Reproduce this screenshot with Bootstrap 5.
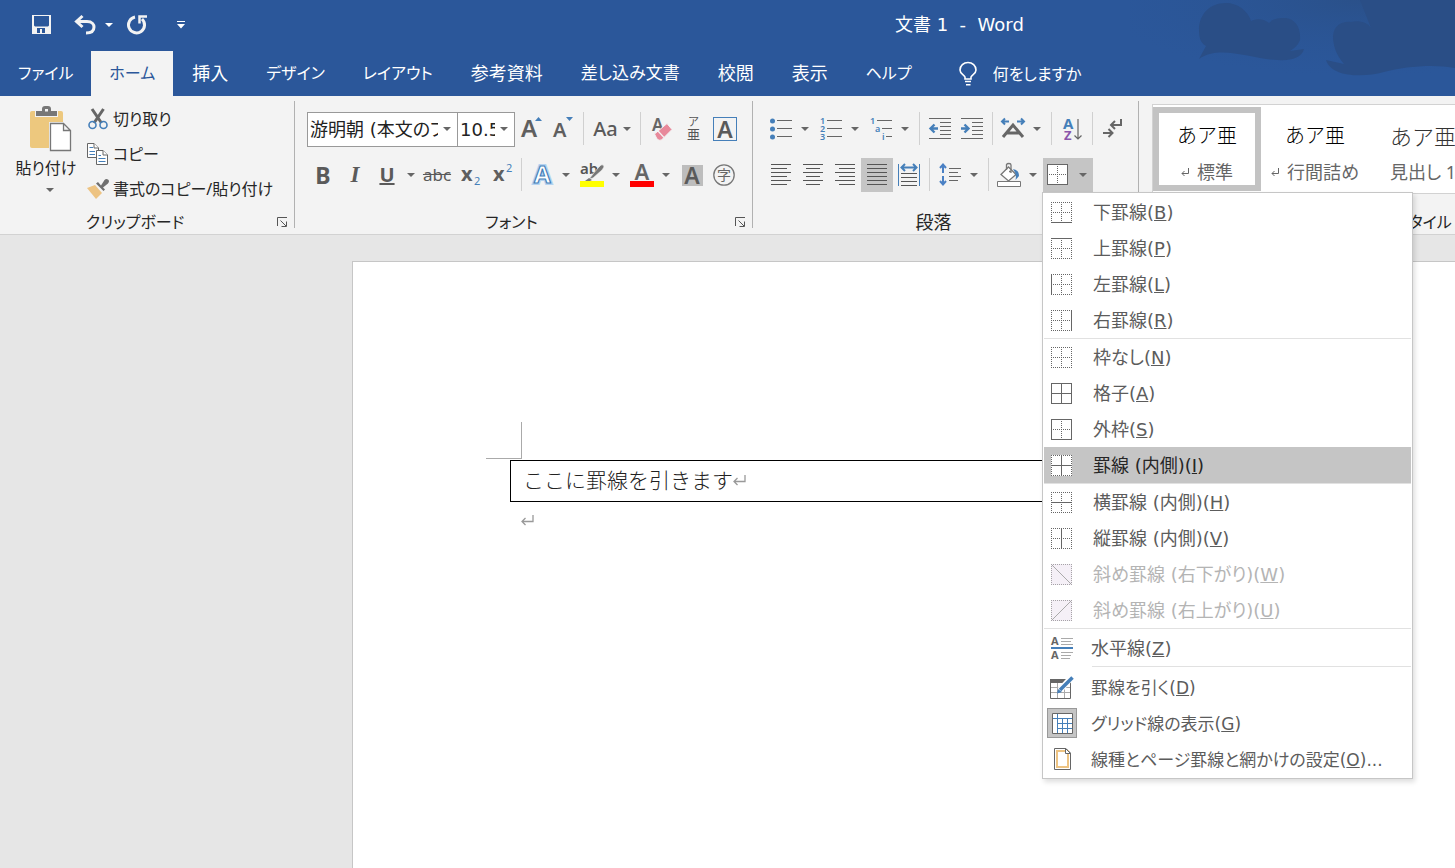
<!DOCTYPE html>
<html lang="ja">
<head>
<meta charset="utf-8">
<meta name="viewport" content="width=device-width, initial-scale=1">
<title>文書 1 - Word</title>
<link rel="stylesheet" href="https://cdn.jsdelivr.net/npm/bootstrap@5.3.0/dist/css/bootstrap.min.css">
<style>
:root{--word:#2b579a;--icon:#666;--blue:#457fb9;--sel:#c5c5c5;--line:#c6c6c6}
body{font-family:"Noto Sans","Noto Sans CJK JP",sans-serif;font-size:18px;line-height:24px;color:#262626;background:#e6e6e6;overflow:hidden;font-feature-settings:"palt"}
button,select,input{font-feature-settings:inherit}
svg{display:block;flex:none;overflow:visible}
.kana{font-size:16px}
.mixed{font-size:17px}
.wide-latin{font-family:"DejaVu Sans","Noto Sans CJK JP",sans-serif}
/* title bar and tabs */
.app-head{background:var(--word);color:#fff;position:relative}
.head-art{position:absolute;top:0;right:0}
.titlebar{height:51px;padding:0 0 2px 25px}
.qat{width:32px;height:32px}
.qat-drop{width:16px;height:32px}
.qat-drop .caret{border-top-color:#fff}
.qat,.qat-drop,.tool,.drop,.launch{padding:0;border:0;background:none;color:inherit;display:flex;align-items:center;justify-content:center;flex:none}
.doc-title{margin-left:698px;white-space:pre;line-height:22px}
.tabs{height:45px}
.tabs .nav-link{color:#fff;padding:10px 19px;height:45px;white-space:nowrap;border-radius:0}
.tabs .nav-link.snug{padding-left:18px;padding-right:18px}
.tabs .nav-link.active{background:#f3f3f3;color:var(--word)}
.tell{background:none;border:0;color:#fff;width:160px;padding:0}
.tell::placeholder{color:#fff;opacity:1}
/* ribbon */
.ribbon{background:#f3f3f3;border-bottom:1px solid #d2d2d2;padding-top:5px}
.rule{width:1px;background:#b1b1b1;margin-bottom:6px;flex:none}
.g-clip{width:294px}.g-font{width:457px}.g-para{width:385px}
.tools{padding:11px 0 17px 12px}
.tools-row{height:35px;display:flex;align-items:flex-start}
.tools-row + .tools-row{margin-top:11px}
.tool{width:32px;height:34px;color:#5a5a5a}
.drop{width:18px;height:34px;padding-right:3px}
.pressed{background:var(--sel)}
.split{width:9px;height:33px;flex:none;display:flex;justify-content:center}
.split::before{content:"";width:1px;background:#d0d0d0}
.caret{width:0;height:0;border:4px solid transparent;border-top-color:#666;border-bottom:0;flex:none}
.combo{height:35px;border:1px solid #999;border-radius:0;background:#fff;appearance:none;padding:0 19px 0 2px;color:#222;width:100%}
.combo-box{position:relative;width:151px}
.combo-box.size{width:58px;margin-left:-1px}
.combo-box .caret{position:absolute;right:7px;top:15px;pointer-events:none}
.group-name{height:24px}
.launch{width:24px;height:24px}
.paste{width:74px;padding:5px 0 0;border:0;background:none;margin-left:9px;color:inherit}
.clip-cmd{height:35px;border:0;background:none;padding:0;gap:4px;color:inherit;white-space:nowrap}
.clip-cmd svg{width:22px}
.lt{font-size:20px;font-weight:600}
.lt-lg{font-size:23px;font-weight:600}
.wide{width:48px;gap:5px;font-weight:500}
.slant{font-family:"Liberation Serif",serif}
.box-a{width:24px;height:24px;border:1px solid var(--blue);line-height:22px}
.shade-a{width:21px;height:21px;background:#bdbdbd;line-height:21px}
/* style gallery */
.g-style{min-width:0;overflow:hidden}
.style-in{width:568px;height:100%}
.gallery{margin:3px 0 0 13px;border:1px solid #d2d2d2;background:#fff;height:90px;padding-top:2px}
.style-tile{width:108px;height:84px;flex:none;border:6px solid transparent;background:none;padding:0;white-space:nowrap;color:#666}
.style-tile.on{border-color:#c3c3c3}
.sample{font-size:20px;line-height:30px;color:#000;font-feature-settings:normal;margin:7px 0 9px;font-weight:300}
.sample.head{font-size:22px;color:#333}
/* border menu */
.menu{position:absolute;top:34px;left:-1px;width:371px;z-index:10;background:#fff;border:1px solid var(--line);box-shadow:2px 3px 5px #0002;padding:1px}
.menu section + .inset + section{padding-top:2px}
.menu .last-rule{padding-top:1px}
.mi{height:36px;width:100%;border:0;background:none;padding:0 0 0 7px;color:#5c5c5c;gap:21px;text-align:left;white-space:nowrap}
.mi .txt{padding-top:2px}
.mi.hot{background:var(--sel);color:#262626}
.mi:disabled{color:#b4b4b4}
.mi.act{padding-left:3px;gap:14px}
.ico{width:30px;height:30px;display:flex;align-items:center;justify-content:center;flex:none}
.ico.on{background:var(--sel);border:1px solid #999}
.menu hr{margin:0;border:0;height:1px;background:#e1e1e1;opacity:1}
.menu hr.inset{margin-left:48px}
/* document */
.sheet{margin:26px 0 0 352px;background:#fff;border:1px solid var(--line);border-right:0;border-bottom:0;padding:160px 54px 0 133px}
.corner{width:36px;height:37px;border-right:1px solid #aaa;border-bottom:1px solid #aaa}
.framed{border:1px solid #000;height:42px;margin:1px 0 0 24px;padding:0 0 2px 12px}
.body-text{font-size:21px;color:#222;font-feature-settings:normal;font-weight:300}
.next-line{padding:13px 0 0 35px}
</style>
</head>
<body class="d-flex flex-column min-vh-100">
<svg width="0" height="0" class="position-absolute" aria-hidden="true">
<defs>
<g id="frame-dots" stroke="#666" stroke-dasharray="1 1"><path d="M0 .5H21M0 20.5H21M.5 0V21M20.5 0V21"/></g>
<g id="cross-dots" stroke="#666" stroke-dasharray="1 1"><path d="M0 10.5H21M10.5 0V21"/></g>
<g id="frame-line" stroke="#666"><path d="M.5 .5H20.5V20.5H.5Z"/></g>
<g id="launch-ico" fill="none" stroke="#555"><path d="M.5 9V.5H10M3.500 3.500L9 9M9.500 4.500V9.500H4.500"/></g>
<g id="ret" fill="none" stroke="#999" stroke-width="1.300"><path d="M12 0V6.500H1M4.500 3L1 6.500L4.500 10"/></g>
</defs>
</svg>

<header class="app-head">
<svg class="head-art" width="325" height="96" viewBox="0 0 325 96" aria-hidden="true">
<defs><radialGradient id="haze" cx=".7" cy="0" r=".8"><stop offset="0" stop-color="#2a4f86" stop-opacity=".8"/><stop offset="1" stop-color="#2a5494" stop-opacity="0"/></radialGradient></defs>
<path fill="url(#haze)" d="M0 0H325V96H0Z"/>
<path fill="#2a4e86" d="M69 30C69 14 80 3 96 3C108 3 118 11 121 21C127 18 135 19 139 23C143 18 150 18 156 18C166 19 171 29 170 40C168 46 163 49 160 51L174 49C172 58 160 61 148 60C124 60 90 44 69 59L76 46C70 43 69 36 69 30Z"/>
<path fill="#2a4e86" d="M230 0H325V68C306 64 275 66 254 72C232 78 201 77 196 60L214 64C206 55 203 45 203 36C204 26 211 21 221 22C228 20 238 22 241 28Z"/>
</svg>
<div class="titlebar d-flex align-items-center position-relative">
<button class="qat me-2" aria-label="上書き保存"><svg width="19" height="19" viewBox="0 0 19 19"><path fill="#f3f3f3" fill-rule="evenodd" d="M0 0H19V19H0ZM2 1V10.500L3 11.500H16L17 10.500V1ZM5 13V18H8V14H10V18H13V13Z"/></svg></button>
<button class="qat ms-1" aria-label="元に戻す"><svg width="22" height="20" viewBox="0 0 22 20" fill="none" stroke="#f3f3f3" stroke-width="3"><path d="M2 6.500H13C18.500 6.500 20 10 20 12C20 15.500 17.500 18 12 18"/><path d="M8.500 1L2.500 6.500L8.500 12"/></svg></button>
<button class="qat-drop" aria-label="元に戻す履歴"><span class="caret"></span></button>
<button class="qat ms-1" aria-label="やり直し"><svg width="20" height="20" viewBox="0 0 20 20" fill="none" stroke="#f3f3f3" stroke-width="3"><path d="M8 2A8 8 0 1 0 15 4"/><path d="M20 1.500H12.500V8.500" stroke-width="2.500"/></svg></button>
<button class="qat ms-2 me-1" aria-label="ツールバーのカスタマイズ"><svg class="ms-2" width="8" height="8" viewBox="0 0 8 8" fill="#fff"><path d="M0 0H8V1H0ZM0 3H8L4 7.500Z"/></svg></button>
<div class="doc-title wide-latin">文書 1  -  Word</div>
</div>
<nav class="tabs nav flex-nowrap align-items-center position-relative">
<a class="nav-link kana snug" href="#">ファイル</a>
<a class="nav-link kana snug active" href="#" aria-current="page">ホーム</a>
<a class="nav-link" href="#">挿入</a>
<a class="nav-link kana" href="#">デザイン</a>
<a class="nav-link kana" href="#">レイアウト</a>
<a class="nav-link" href="#">参考資料</a>
<a class="nav-link mixed" href="#">差し込み文書</a>
<a class="nav-link" href="#">校閲</a>
<a class="nav-link" href="#">表示</a>
<a class="nav-link kana" href="#">ヘルプ</a>
<label class="d-flex align-items-center ms-4" for="tell" aria-label="操作アシスト"><svg class="ms-1 me-3" width="18" height="24" viewBox="0 0 18 24" fill="none" stroke="#fff" stroke-width="1.600"><path d="M6 17V15C5 12.500 1 12 1 8A8 7.500 0 0 1 17 8C17 12 13 12.500 12 15V17ZM6 19.500H12M7 22.800H11.500"/></svg></label>
<input class="tell kana" id="tell" type="text" placeholder="何をしますか">
</nav>
</header>

<section class="ribbon d-flex" aria-label="ホーム">
<div class="g-clip d-flex flex-column flex-shrink-0">
<div class="d-flex">
<button class="paste kana d-flex flex-column align-items-center">
<svg class="ms-2" width="41" height="46" viewBox="0 0 41 46"><path fill="#edc87e" d="M2 5H31Q33 5 33 7V42H2Q0 42 0 40V7Q0 5 2 5Z"/><path fill="#f3f3f3" d="M5 4H28V11H5Z"/><path fill="#777" fill-rule="evenodd" d="M6 5H12V3Q12 0 15 0H18Q21 0 21 3V5H27V10H6ZM15 3V5.500H18V3Z"/><path fill="#f3f3f3" d="M19 16H34L41 23V46H19Z"/><path fill="#fff" stroke="#777" stroke-width="1.300" d="M20.500 17.500H33.500L40.500 24.500V44.500H20.500ZM33.500 17.500V24.500H40.500"/></svg>
<span class="mt-1">貼り付け</span>
<span class="caret mt-2 ms-2"></span>
</button>
<div class="d-flex flex-column ms-1">
<button class="clip-cmd kana d-flex align-items-center"><svg width="20" height="22" viewBox="0 0 20 22"><path d="M4 1L13.500 15M15.500 1L6 15" stroke="#666" stroke-width="3"/><g fill="none" stroke="var(--blue)" stroke-width="1.600"><circle cx="4.500" cy="17" r="3.500"/><circle cx="15.500" cy="17" r="3.500"/></g></svg>切り取り</button>
<button class="clip-cmd kana d-flex align-items-center"><svg width="22" height="22" viewBox="0 0 22 22" fill="#fff" stroke="#666"><path d="M.5 .5H7L11.500 5V14.500H.5Z"/><path d="M9.500 7.500H16L20.500 12V21.500H9.500Z"/><path d="M16 7.500V12H20.500M7 .5V5H11.500"/><path stroke="var(--blue)" d="M2.500 4.500H6M2.500 8.500H8M2.500 11.500H8M11.500 12.500H14M11.500 15.500H18.500M11.500 18.500H18.500"/></svg>コピー</button>
<button class="clip-cmd kana d-flex align-items-center"><svg width="22" height="20" viewBox="0 0 22 20"><path d="M0 9L8 6L15 14L9 20Z" fill="#edc382"/><path d="M9 4.500L16.500 12L18 10.500L16 8.500L21 4.500Q23 2 21 .5Q19 -.5 17.500 1L14 6.500L11 3Z" fill="#6f6f6f"/></svg>書式のコピー/貼り付け</button>
</div>
</div>
<div class="d-flex mt-auto group-name"><span class="flex-fill text-center kana">クリップボード</span><button class="launch" aria-label="クリップボードの設定"><svg width="11" height="11"><use href="#launch-ico"/></svg></button></div>
</div>
<div class="rule"></div>

<div class="g-font d-flex flex-column flex-shrink-0">
<div class="tools">
<div class="tools-row">
<div class="combo-box"><select class="combo wide-latin" aria-label="フォント"><option>游明朝 (本文のフォント - 日本語)</option></select><span class="caret"></span></div>
<div class="combo-box size"><select class="combo wide-latin" aria-label="フォント サイズ"><option>10.5</option></select><span class="caret"></span></div>
<button class="tool" aria-label="フォントの拡大"><svg width="21" height="22" viewBox="0 0 21 22"><text x="0" y="19" font-size="24" font-weight="600" fill="#5f5f5f">A</text><path fill="var(--blue)" d="M14 3H21L17.500 -1Z"/></svg></button>
<button class="tool" aria-label="フォントの縮小"><svg width="20" height="22" viewBox="0 0 20 22"><text x="0" y="19" font-size="20" font-weight="600" fill="#5f5f5f">A</text><path fill="var(--blue)" d="M13 -1H20L16.500 3Z"/></svg></button>
<span class="split"></span>
<button class="tool lt wide" aria-label="文字種の変換">Aa<span class="caret"></span></button>
<span class="split"></span>
<button class="tool" aria-label="書式のクリア"><svg width="19" height="22" viewBox="0 0 19 22"><text x="0" y="13" font-size="17" font-weight="600" fill="#666">A</text><g stroke="#f3f3f3" fill="#e8899b"><path d="M2.500 16L15 5.500L20 11.500L9.500 22Q7 23 5 21Z"/><path d="M6 13L12 19.500" stroke-width="1.200"/></g></svg></button>
<button class="tool" aria-label="ルビ"><svg width="13" height="24" viewBox="0 0 13 24" fill="#555"><text x="6.500" y="9" text-anchor="middle" font-size="11">ア</text><text x="6.500" y="22" text-anchor="middle" font-size="13">亜</text></svg></button>
<button class="tool" aria-label="囲み線"><span class="box-a lt-lg">A</span></button>
</div>
<div class="tools-row">
<button class="tool lt-lg fw-bold" aria-label="太字">B</button>
<button class="tool lt-lg fst-italic fw-bold slant" aria-label="斜体">I</button>
<button class="tool lt" aria-label="下線"><u class="fw-bold">U</u></button>
<button class="drop" aria-label="下線の種類"><span class="caret"></span></button>
<button class="tool" aria-label="取り消し線"><s class="mixed">abc</s></button>
<button class="tool" aria-label="下付き"><svg width="16" height="22" viewBox="0 0 16 22"><text x="0" y="17" font-size="20" font-weight="700" fill="#5f5f5f">x</text><text x="13" y="21" font-size="11" fill="var(--blue)">2</text></svg></button>
<button class="tool" aria-label="上付き"><svg width="16" height="22" viewBox="0 0 16 22"><text x="0" y="17" font-size="20" font-weight="700" fill="#5f5f5f">x</text><text x="13" y="8" font-size="11" fill="var(--blue)">2</text></svg></button>
<span class="split"></span>
<button class="tool" aria-label="文字の効果"><svg width="18" height="20" viewBox="0 0 18 20"><text x="1" y="18" font-size="24" font-weight="700" fill="#fff" stroke="#b5d3f0" stroke-width="4">A</text><text x="1" y="18" font-size="24" font-weight="700" fill="#fff" stroke="#457fb9" stroke-width="1.200">A</text></svg></button>
<button class="drop" aria-label="文字の効果の一覧"><span class="caret"></span></button>
<button class="tool" aria-label="蛍光ペン"><svg width="24" height="24" viewBox="0 0 24 24"><text x="0" y="11" font-size="15" font-weight="600" fill="#555">ab</text><path d="M9 16L18 5L21 2Q24 1 24 4L22 7L13 15Z" fill="#777" stroke="#f3f3f3" stroke-width=".6"/><path d="M5 18L9 15L12 17L10 18Z" fill="#777"/><path fill="#ff0" d="M0 18H24V24H0Z"/></svg></button>
<button class="drop" aria-label="蛍光ペンの色"><span class="caret"></span></button>
<button class="tool" aria-label="フォントの色"><svg width="24" height="24" viewBox="0 0 24 24"><text x="12" y="17" text-anchor="middle" font-size="22" font-weight="600" fill="#666">A</text><path fill="#f00" d="M0 18H24V24H0Z"/></svg></button>
<button class="drop" aria-label="フォントの色の一覧"><span class="caret"></span></button>
<button class="tool" aria-label="文字の網かけ"><span class="shade-a lt-lg">A</span></button>
<button class="tool" aria-label="囲い文字"><svg width="22" height="22" viewBox="0 0 22 22"><circle cx="11" cy="11" r="10.200" fill="none" stroke="#777" stroke-width="1.300"/><text x="11" y="16" text-anchor="middle" font-size="14" fill="#666">字</text></svg></button>
</div>
</div>
<div class="d-flex mt-auto group-name"><span class="flex-fill text-center kana">フォント</span><button class="launch" aria-label="フォントの設定"><svg width="11" height="11"><use href="#launch-ico"/></svg></button></div>
</div>
<div class="rule"></div>

<div class="g-para d-flex flex-column flex-shrink-0">
<div class="tools">
<div class="tools-row">
<button class="tool" aria-label="箇条書き"><svg width="22" height="22" viewBox="0 0 22 22"><g fill="var(--blue)"><circle cx="2.500" cy="3" r="2.500"/><circle cx="2.500" cy="11" r="2.500"/><circle cx="2.500" cy="19" r="2.500"/></g><path stroke="#666" d="M7 2.500H22M7 10.500H22M7 18.500H22"/></svg></button>
<button class="drop" aria-label="行頭文字"><span class="caret"></span></button>
<button class="tool" aria-label="段落番号"><svg width="22" height="22" viewBox="0 0 22 22"><g fill="var(--blue)" font-size="9" font-weight="600"><text y="6">1</text><text y="14">2</text><text y="22">3</text></g><path stroke="#666" d="M7 2.500H22M7 10.500H22M7 18.500H22"/></svg></button>
<button class="drop" aria-label="番号の書式"><span class="caret"></span></button>
<button class="tool" aria-label="アウトライン"><svg width="22" height="22" viewBox="0 0 22 22"><g fill="var(--blue)" font-size="9" font-weight="600"><text y="6">1</text><text x="5" y="14">a</text><text x="12" y="22">i</text></g><path stroke="#666" d="M7 2.500H22M12 10.500H22M16 18.500H22"/></svg></button>
<button class="drop" aria-label="リストの一覧"><span class="caret"></span></button>
<span class="split"></span>
<button class="tool" aria-label="インデントを減らす"><svg width="22" height="22" viewBox="0 0 22 22" fill="none"><path stroke="#666" d="M0 .5H22M11 4.500H22M11 8.500H22M11 12.500H22M11 16.500H22M0 20.500H22"/><path stroke="var(--blue)" stroke-width="2.400" d="M9 10.500H2M5.500 6.500L1.500 10.500L5.500 14.500"/></svg></button>
<button class="tool" aria-label="インデントを増やす"><svg width="22" height="22" viewBox="0 0 22 22" fill="none"><path stroke="#666" d="M0 .5H22M11 4.500H22M11 8.500H22M11 12.500H22M11 16.500H22M0 20.500H22"/><path stroke="var(--blue)" stroke-width="2.400" d="M0 10.500H7M3.500 6.500L7.500 10.500L3.500 14.500"/></svg></button>
<span class="split"></span>
<button class="tool" aria-label="拡張書式"><svg width="24" height="20" viewBox="0 0 24 20" fill="none"><path stroke="var(--blue)" stroke-width="2" d="M1 2.500H8M4 -.5L1 2.500L4 5.500M16 2.500H23M20 -.5L23 2.500L20 5.500"/><path stroke="#666" stroke-width="3" d="M2 18L12 6L22 18M6 14H18"/></svg></button>
<button class="drop" aria-label="拡張書式の一覧"><span class="caret"></span></button>
<span class="split"></span>
<button class="tool" aria-label="並べ替え"><svg width="19" height="24" viewBox="0 0 19 24"><text x="0" y="12" font-size="15" font-weight="700" fill="var(--blue)">A</text><text x="1" y="23" font-size="13" font-weight="700" fill="#8a56ab">Z</text><path fill="none" stroke="#666" stroke-width="1.200" d="M15 2V22M11.500 18.500L15 22L18.500 18.500"/></svg></button>
<span class="split"></span>
<button class="tool" aria-label="編集記号の表示"><svg width="20" height="20" viewBox="0 0 20 20" fill="none" stroke="#666" stroke-width="2"><path d="M18 0V6H8M12 2L8 6L12 10M0 14H9M5.500 10L9.500 14L5.500 18"/></svg></button>
</div>
<div class="tools-row">
<button class="tool" aria-label="左揃え"><svg width="20" height="22" stroke="#555"><path d="M0 .5H20M0 4.500H16M0 8.500H20M0 12.500H16M0 16.500H20M0 20.500H16"/></svg></button>
<button class="tool" aria-label="中央揃え"><svg width="20" height="22" stroke="#555"><path d="M0 .5H20M3 4.500H17M0 8.500H20M3 12.500H17M0 16.500H20M3 20.500H17"/></svg></button>
<button class="tool" aria-label="右揃え"><svg width="20" height="22" stroke="#555"><path d="M0 .5H20M4 4.500H20M0 8.500H20M4 12.500H20M0 16.500H20M4 20.500H20"/></svg></button>
<button class="tool pressed" aria-label="両端揃え" aria-pressed="true"><svg width="20" height="22" stroke="#555"><path d="M0 .5H20M0 4.500H20M0 8.500H20M0 12.500H20M0 16.500H20M0 20.500H20"/></svg></button>
<button class="tool" aria-label="均等割り付け"><svg width="22" height="24" viewBox="0 0 22 24" fill="none"><path stroke="#555" d="M3 10.500H19M3 14.500H19M3 18.500H19M3 22.500H19"/><path stroke="var(--blue)" d="M.5 1V23M21.500 1V23"/><path stroke="var(--blue)" stroke-width="2" d="M4 4.500H18M7 1L3.500 4.500L7 8M15 1L18.500 4.500L15 8"/></svg></button>
<span class="split"></span>
<button class="tool" aria-label="行間"><svg width="22" height="24" viewBox="0 0 22 24" fill="none"><path stroke="#666" d="M10 5.500H22M10 9.500H19M10 13.500H22M10 17.500H19"/><path stroke="#4a80c4" stroke-width="2" d="M4 1V10M1 5L4 1.500L7 5M4 13V22M1 18L4 21.500L7 18"/></svg></button>
<button class="drop" aria-label="行間の一覧"><span class="caret"></span></button>
<span class="split"></span>
<button class="tool" aria-label="塗りつぶし"><svg width="24" height="24" viewBox="0 0 24 24" fill="#fff" stroke="#777"><path d="M4 11.500L11.500 4L19 11.500L11.500 18Z" stroke-width="1.300"/><path fill="none" d="M9.500 7V1.500Q10 .5 12 .5Q14 .5 14 2V10M12 8.500H14" stroke-width="1.300"/><path fill="var(--blue)" stroke="none" d="M16 6Q22 7 22 13L18.500 17Q20 11 16 6Z"/><path d="M.5 18.500H23.500V23.500H.5Z"/></svg></button>
<button class="drop" aria-label="塗りつぶしの色"><span class="caret"></span></button>
<div class="position-relative d-flex pressed">
<button class="tool" aria-label="罫線"><svg width="24" height="22" fill="none" shape-rendering="crispEdges"><path fill="#fff" d="M0 0H21V21H0Z"/><use href="#cross-dots"/><use href="#frame-line"/></svg></button>
<button class="drop" aria-label="罫線の一覧" aria-expanded="true"><span class="caret"></span></button>
<div class="menu wide-latin" role="menu">
<section>
<button class="mi d-flex align-items-center" role="menuitem"><svg width="21" height="21" shape-rendering="crispEdges"><use href="#frame-dots"/><use href="#cross-dots"/><path stroke="#666" d="M0 20.500H21"/></svg><span class="txt">下罫線(<u>B</u>)</span></button>
<button class="mi d-flex align-items-center" role="menuitem"><svg width="21" height="21" shape-rendering="crispEdges"><use href="#frame-dots"/><use href="#cross-dots"/><path stroke="#666" d="M0 .5H21"/></svg><span class="txt">上罫線(<u>P</u>)</span></button>
<button class="mi d-flex align-items-center" role="menuitem"><svg width="21" height="21" shape-rendering="crispEdges"><use href="#frame-dots"/><use href="#cross-dots"/><path stroke="#666" d="M.5 0V21"/></svg><span class="txt">左罫線(<u>L</u>)</span></button>
<button class="mi d-flex align-items-center" role="menuitem"><svg width="21" height="21" shape-rendering="crispEdges"><use href="#frame-dots"/><use href="#cross-dots"/><path stroke="#666" d="M20.500 0V21"/></svg><span class="txt">右罫線(<u>R</u>)</span></button>
</section>
<hr>
<section>
<button class="mi d-flex align-items-center" role="menuitem"><svg width="21" height="21" shape-rendering="crispEdges"><use href="#frame-dots"/><use href="#cross-dots"/></svg><span class="txt">枠なし(<u>N</u>)</span></button>
<button class="mi d-flex align-items-center" role="menuitem"><svg width="21" height="21" fill="none" shape-rendering="crispEdges"><use href="#frame-line"/><path stroke="#666" d="M0 10.500H21M10.500 0V21"/></svg><span class="txt">格子(<u>A</u>)</span></button>
<button class="mi d-flex align-items-center" role="menuitem"><svg width="21" height="21" fill="none" shape-rendering="crispEdges"><use href="#frame-line"/><use href="#cross-dots"/></svg><span class="txt">外枠(<u>S</u>)</span></button>
<button class="mi hot d-flex align-items-center" role="menuitem"><svg width="21" height="21" shape-rendering="crispEdges"><path fill="#fff" d="M0 0H21V21H0Z"/><use href="#frame-dots"/><path stroke="#666" d="M0 10.500H21M10.500 0V21"/></svg><span class="txt">罫線 (内側)(<u>I</u>)</span></button>
</section>
<hr>
<section>
<button class="mi d-flex align-items-center" role="menuitem"><svg width="21" height="21" shape-rendering="crispEdges"><use href="#frame-dots"/><use href="#cross-dots"/><path stroke="#666" d="M0 10.500H21"/></svg><span class="txt">横罫線 (内側)(<u>H</u>)</span></button>
<button class="mi d-flex align-items-center" role="menuitem"><svg width="21" height="21" shape-rendering="crispEdges"><use href="#frame-dots"/><use href="#cross-dots"/><path stroke="#666" d="M10.500 0V21"/></svg><span class="txt">縦罫線 (内側)(<u>V</u>)</span></button>
<button class="mi d-flex align-items-center" role="menuitem" disabled><svg width="21" height="21"><path fill="#f5f0f7" d="M0 0H21V21H0Z"/><use href="#frame-dots" opacity=".55" shape-rendering="crispEdges"/><path stroke="#aaa" d="M1 1L20 20"/></svg><span class="txt">斜め罫線 (右下がり)(<u>W</u>)</span></button>
<button class="mi d-flex align-items-center" role="menuitem" disabled><svg width="21" height="21"><path fill="#f5f0f7" d="M0 0H21V21H0Z"/><use href="#frame-dots" opacity=".55" shape-rendering="crispEdges"/><path stroke="#aaa" d="M1 20L20 1"/></svg><span class="txt">斜め罫線 (右上がり)(<u>U</u>)</span></button>
</section>
<hr>
<section class="last-rule">
<button class="mi act d-flex align-items-center" role="menuitem"><span class="ico"><svg width="22" height="23" viewBox="0 0 22 23"><g font-size="11" font-weight="700" fill="#666" font-family="Noto Sans"><text y="8">A</text><text y="22">A</text></g><path stroke="#aaa" d="M10 1.500H22M10 4.500H20M10 7.500H22M10 15.500H22M10 18.500H20M10 21.500H19"/><path fill="var(--blue)" d="M0 10H22V12H0Z"/></svg></span><span class="txt">水平線(<u>Z</u>)</span></button>
</section>
<hr class="inset">
<section>
<button class="mi act mixed d-flex align-items-center" role="menuitem"><span class="ico"><svg width="24" height="23" viewBox="0 0 24 23"><path stroke="#aaa" d="M7.500 6V22M14.500 6V22M1 11.500H20M1 16.500H20"/><path fill="none" stroke="#666" d="M.5 4V22.500H20.500V4"/><path fill="#666" d="M0 3H21V7H0Z"/><path stroke="#fff" stroke-width="6" d="M10 14L20 3"/><path stroke="var(--blue)" stroke-width="3.500" d="M10 14L22.500 1.500"/><path fill="var(--blue)" d="M7 17.500L8 13L12 16Z"/></svg></span><span class="txt">罫線を引く(<u>D</u>)</span></button>
<button class="mi act mixed d-flex align-items-center" role="menuitemcheckbox" aria-checked="true"><span class="ico on"><svg width="21" height="21" fill="none"><path fill="#fff" stroke="#666" d="M.5 .5H20.500V20.500H.5Z"/><path stroke="var(--blue)" d="M1 5.500H20M5.500 1V20M5 10.500H20M5 15.500H20M10.500 5V20M15.500 5V20"/></svg></span><span class="txt">グリッド線の表示(<u>G</u>)</span></button>
<button class="mi act mixed d-flex align-items-center" role="menuitem"><span class="ico"><svg width="17" height="22" viewBox="0 0 17 22" fill="#fff"><path stroke="#666" d="M.5 .5H12L16.500 5V21.500H.5Z"/><path stroke="#edc382" stroke-width="2" d="M3 3H14V19H3Z"/><path stroke="#666" d="M11.500 .5V5.500H16.500Z"/></svg></span><span class="txt">線種とページ罫線と網かけの設定(<u>O</u>)...</span></button>
</section>
</div>
</div>
</div>
</div>
<div class="d-flex mt-auto group-name"><span class="flex-fill text-center">段落</span><button class="launch" aria-label="段落の設定"><svg width="11" height="11"><use href="#launch-ico"/></svg></button></div>
</div>
<div class="rule"></div>

<div class="g-style flex-fill">
<div class="style-in d-flex flex-column">
<div class="gallery d-flex">
<button class="style-tile on"><div class="sample">あア亜</div><div class="d-flex justify-content-center align-items-center gap-2"><svg width="8" height="9" fill="none" stroke="#666"><path d="M7.500 0V5.500H1M3.500 3L1 5.500L3.500 8"/></svg>標準</div></button>
<button class="style-tile"><div class="sample">あア亜</div><div class="d-flex justify-content-center align-items-center gap-2"><svg width="8" height="9" fill="none" stroke="#666"><path d="M7.500 0V5.500H1M3.500 3L1 5.500L3.500 8"/></svg>行間詰め</div></button>
<button class="style-tile"><div class="sample head">あア亜</div><div>見出し 1</div></button>
</div>
<div class="mt-auto group-name text-center kana">スタイル</div>
</div>
</div>
</section>

<main class="d-flex flex-column flex-fill">
<article class="sheet flex-fill">
<div class="corner"></div>
<div class="framed d-flex align-items-center"><span class="body-text">ここに罫線を引きます</span><svg width="13" height="11"><use href="#ret"/></svg></div>
<div class="next-line"><svg width="13" height="11"><use href="#ret"/></svg></div>
</article>
</main>
<script src="https://cdn.jsdelivr.net/npm/bootstrap@5.3.0/dist/js/bootstrap.bundle.min.js"></script>
</body>
</html>
